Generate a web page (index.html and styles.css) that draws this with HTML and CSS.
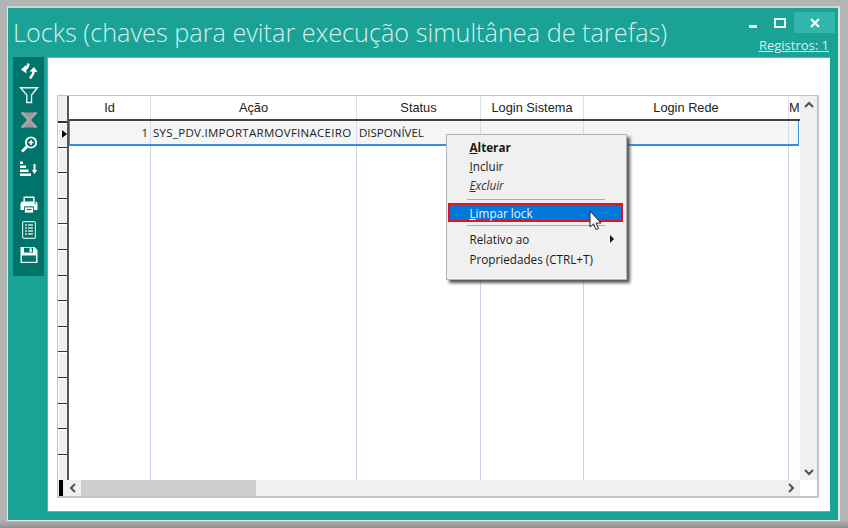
FILE: index.html
```html
<!DOCTYPE html>
<html lang="pt">
<head>
<meta charset="utf-8">
<title>Locks</title>
<link rel="stylesheet" href="styles.css">
</head>
<body>
<div class="frame">
  <div class="window">
    <header class="titlebar">
      <h1 class="title">Locks (chaves para evitar execução simultânea de tarefas)</h1>
      <div class="title-right">
        <div class="controls">
          <span class="ctl ctl-min"></span>
          <span class="ctl ctl-max"></span>
          <span class="ctl ctl-close">
            <svg width="10" height="10" viewBox="0 0 10 10"><path d="M1 1L9 9M9 1L1 9" stroke="#fff" stroke-width="2"/></svg>
          </span>
        </div>
        <a class="records">Registros: 1</a>
      </div>
    </header>
    <div class="main">
      <aside class="sidebar">
        <svg class="tool" width="20" height="20" viewBox="0 0 20 20"><path d="M2 8.500L7 4L7.500 12.500Z" fill="#fff"/><path d="M6 8Q9 7 9.500 2.500" fill="none" stroke="#fff" stroke-width="2.500"/><path d="M10.500 10.500L15 6L18.500 11Z" fill="#fff"/><path d="M15 10Q14 14 11 17.500" fill="none" stroke="#fff" stroke-width="2.500"/></svg>
        <svg class="tool" width="20" height="20" viewBox="0 0 20 20"><path d="M1.500 2.700H18.500L12.500 10V17.500H7.800V10Z" fill="none" stroke="#eef8f6" stroke-width="1.400"/></svg>
        <svg class="tool" width="20" height="20" viewBox="0 0 20 20"><path d="M1.500 2.500H18.500L11.500 10L18.500 17.500H1.500L8.500 10Z" fill="#9a9a9a"/><path d="M3 2.500L17 17.500M17 2.500L3 17.500" stroke="#a6a6a6" stroke-width="3"/></svg>
        <svg class="tool" width="20" height="20" viewBox="0 0 20 20"><circle cx="12" cy="8.500" r="5.200" fill="none" stroke="#fff" stroke-width="1.800"/><path d="M8 12.500L3 17.500" stroke="#fff" stroke-width="2.800"/><path d="M9.500 8.500H14.500M12 6V11" stroke="#fff" stroke-width="1.500"/></svg>
        <svg class="tool" width="20" height="20" viewBox="0 0 20 20"><path d="M1 2.500H4V5H1ZM1 6.500H7V9H1ZM1 10.500H9.500V13H1ZM1 14.500H12V17H1Z" fill="#fff"/><path d="M15.500 5V11.500" stroke="#fff" stroke-width="2"/><path d="M12.800 11H18.200L15.500 15Z" fill="#fff"/></svg>
        <svg class="tool tool-gap" width="20" height="20" viewBox="0 0 20 20"><path d="M5.200 6.500V2.200H14.800V6.500" fill="none" stroke="#fff" stroke-width="1.500"/><path d="M3.500 6.500H16.500Q18.500 6.500 18.500 9V15H15V11.500H5V15H1.500V9Q1.500 6.500 3.500 6.500Z" fill="#fff"/><path d="M5.500 12H14.500V18H5.500Z" fill="#fff" stroke="#00736a" stroke-width="0.800"/><path d="M7.500 14.500H12.500" stroke="#00736a" stroke-width="1.200"/><path d="M15 8H17" stroke="#00736a"/></svg>
        <svg class="tool" width="20" height="20" viewBox="0 0 20 20"><rect x="3.600" y="1.600" width="12.800" height="16.800" rx="1.500" fill="none" stroke="#cfe6e3" stroke-width="1.200"/><path d="M6 5H14M6 8H14M6 11H14M6 14H14" stroke="#cfe6e3" stroke-width="1.600"/><path d="M8.500 4V15" stroke="#00736a"/></svg>
        <svg class="tool" width="20" height="20" viewBox="0 0 20 20"><path d="M1.500 2H15.500L18.500 5V18H1.500Z" fill="#eef8f6"/><path d="M5 2.800H14V7.500H5Z" fill="#00736a"/><path d="M10.500 3.300H12.800V7H10.500Z" fill="#eef8f6"/><path d="M3 10.500H17V16.800H3Z" fill="#00736a"/></svg>
      </aside>
      <section class="panel">
        <div class="grid">
          <div class="grid-body">
            <div class="indicator">
              <div class="ind-head"></div>
              <div class="ind-row ind-current"><span class="ind-arrow"></span></div>
              <div class="ind-row"></div><div class="ind-row"></div><div class="ind-row"></div>
              <div class="ind-row"></div><div class="ind-row"></div><div class="ind-row"></div>
              <div class="ind-row"></div><div class="ind-row"></div><div class="ind-row"></div>
              <div class="ind-row"></div><div class="ind-row"></div><div class="ind-row"></div>
              <div class="ind-row"></div>
            </div>
            <div class="data">
              <div class="heads">
                <div class="c c-id">Id</div>
                <div class="c c-acao">Ação</div>
                <div class="c c-status">Status</div>
                <div class="c c-sis">Login Sistema</div>
                <div class="c c-rede">Login Rede</div>
                <div class="c c-m">M</div>
              </div>
              <div class="columns">
                <div class="col c-id"></div>
                <div class="col c-acao"></div>
                <div class="col c-status"></div>
                <div class="col c-sis"></div>
                <div class="col c-rede"></div>
                <div class="col c-m"></div>
                <div class="row">
                  <div class="cell c-id num">1</div>
                  <div class="cell c-acao cell-wide">SYS_PDV.IMPORTARMOVFINACEIRO</div>
                  <div class="cell c-status">DISPONÍVEL</div>
                  <div class="cell c-sis"></div>
                  <div class="cell c-rede"></div>
                </div>
              </div>
            </div>
            <div class="vscroll">
              <svg width="10" height="7" viewBox="0 0 10 7"><path d="M1 6L5 2L9 6" fill="none" stroke="#505050" stroke-width="2"/></svg>
              <svg width="10" height="7" viewBox="0 0 10 7"><path d="M1 1L5 5L9 1" fill="none" stroke="#505050" stroke-width="2"/></svg>
            </div>
          </div>
          <div class="hscroll">
            <span class="hs-mark"></span>
            <span class="hs-btn"><svg width="7" height="10" viewBox="0 0 7 10"><path d="M6 1L2 5L6 9" fill="none" stroke="#505050" stroke-width="2"/></svg></span>
            <span class="hs-thumb"></span>
            <span class="hs-track"></span>
            <span class="hs-btn"><svg width="7" height="10" viewBox="0 0 7 10"><path d="M1 1L5 5L1 9" fill="none" stroke="#505050" stroke-width="2"/></svg></span>
            <span class="hs-corner"></span>
          </div>
        </div>
      </section>
    </div>
  </div>
</div>
<div class="menu">
  <div class="mi mi-bold"><u>A</u>lterar</div>
  <div class="mi"><u>I</u>ncluir</div>
  <div class="mi mi-italic"><u>E</u>xcluir</div>
  <div class="sep"></div>
  <div class="mi mi-active"><u>L</u>impar lock</div>
  <div class="sep sep-after"></div>
  <div class="mi mi-sub">Relativo ao<span class="sub-arrow"></span></div>
  <div class="mi">Propriedades (CTRL+T)</div>
</div>
<svg class="cursor" width="14" height="22" viewBox="0 0 14 22"><path d="M1 1V17L4.500 13.800L7 19.500L9.500 18.400L7 13H12Z" fill="#fff" stroke="#222" stroke-width="1"/></svg>
</body>
</html>
```

FILE: styles.css
```css
* { box-sizing: border-box; }
html, body { margin: 0; padding: 0; }
body { width: 848px; height: 528px; overflow: hidden; position: relative; font-family: "Open Sans", sans-serif; }
.frame {
  width: 848px; height: 528px;
  background: linear-gradient(#b4b4b4, #b4b4b4 520px, #8e8e8e);
  padding: 6px 8px 7px 7px;
}
.window {
  height: 100%;
  background: #1aa297;
  border-top: 2px solid #c9d6d4;
  border-left: 1px solid #dfe8e7;
  border-right: 2px solid #dfe8e7;
  border-bottom: 1px solid #dfe8e7;
  display: flex; flex-direction: column;
}
.titlebar { height: 49px; display: flex; justify-content: space-between; padding: 0 9px 0 5px; flex: none; }
.title {
  margin: 6px 0 0; font-family: "Open Sans", sans-serif; font-weight: 300;
  font-size: 25.250px; line-height: 36px; color: #d5f0ec; white-space: nowrap;
}
.title-right { display: flex; flex-direction: column; align-items: flex-end; }
.controls { display: flex; align-items: center; height: 21px; margin-top: 4px; margin-right: -6px; }
.ctl { display: flex; align-items: center; justify-content: center; }
.ctl-min { width: 8px; height: 3px; background: #e6f6f4; margin: 7px 17px 0 0; }
.ctl-max { width: 12px; height: 10px; border: 2px solid #e6f6f4; margin: 1px 8px 0 0; }
.ctl-close { width: 41px; height: 21px; background: #32b6ab; }
.records { margin-top: 4px; color: #d5f0ec; font-size: 13px; line-height: 17px; text-decoration: underline; }
.main { flex: 1; display: flex; padding: 0 9px 8px 5px; min-height: 0; }
.sidebar {
  width: 31px; height: 219px; background: #00736a; margin-right: 3px; flex: none;
  display: flex; flex-direction: column; align-items: center; padding-top: 3.500px; gap: 4.600px;
}
.tool { flex: none; height: 20px; }
.tool-gap { margin-top: 12px; }
.panel {
  flex: 1; background: #fff; padding: 37px 11px 13px 9px;
  border-left: 1px solid #8f9e9c; border-top: 1px solid #8f9e9c; border-bottom: 1px solid #8f9e9c;
}
.grid { height: 100%; border: 1px solid #c4c4cf; border-bottom-width: 2px; border-right-width: 2px; display: flex; flex-direction: column; background: #fff; }
.grid-body { flex: 1; display: flex; min-height: 0; overflow: hidden; }
.indicator { width: 11px; flex: none; background: #f0f0f0; border-right: 2px solid #555; overflow: hidden; }
.ind-head { height: 25px; border-bottom: 1px solid #f0f0f0; }
.ind-row { height: 25.600px; border-top: 1px solid #333; position: relative; box-shadow: inset 1px 1px 0 #fff; }
.ind-current { border-top: 2px solid #333; }
.ind-arrow { position: absolute; left: 4px; top: 7px; border-left: 5px solid #000; border-top: 4px solid transparent; border-bottom: 4px solid transparent; }
.data { flex: 1; display: flex; flex-direction: column; min-width: 0; }
.heads { display: flex; height: 25px; flex: none; font-family: "Liberation Sans", sans-serif; font-size: 12.800px; color: #222; border-bottom: 2px solid #444; }
.heads .c { text-align: center; line-height: 23px; border-right: 1px solid #e0e0ea; overflow: hidden; }
.c-id { width: 82px; }
.c-acao { width: 206px; }
.c-status { width: 124px; }
.c-sis { width: 103px; }
.c-rede { width: 205px; }
.c-m { width: 11px; }
.heads .c-m { border-right: 0; text-align: left; }
.columns { flex: 1; display: flex; position: relative; }
.col { border-right: 1px solid #cfcfe8; flex: none; }
.col.c-m { border-right: 0; }
.row {
  position: absolute; left: 0; right: 1px; top: 0; height: 25px; display: flex;
  background: #f5f5f5; border: 1px solid #2f90ea; border-top: 0; border-bottom-width: 2px;
  font-size: 11.500px; line-height: 24px; color: #222;
}
.cell { flex: none; padding: 0 2px; white-space: nowrap; border-right: 1px solid #d9d9ee; overflow: hidden; }
.cell.c-id { width: 81px; }
.cell-wide { letter-spacing: 0.280px; }
.num { text-align: right; }
.vscroll { width: 17px; flex: none; background: #f0f0f0; display: flex; flex-direction: column; justify-content: space-between; align-items: center; padding: 5px 0 4px; }
.hscroll { height: 16px; flex: none; display: flex; background: #f0f0f0; }
.hs-mark { width: 6px; background: #000; border-left: 1px solid #f0f0f0; border-right: 1px solid #f0f0f0; flex: none; }
.hs-btn { width: 17px; flex: none; display: flex; align-items: center; justify-content: center; }
.hs-thumb { width: 175px; background: #cdcdcd; flex: none; }
.hs-track { flex: 1; }
.hs-corner { width: 17px; background: #fff; flex: none; }
.menu {
  position: absolute; left: 446px; top: 134px; width: 181px; height: 146px;
  background: #f0f0f0; border: 1px solid #b5b5b5; box-shadow: 3px 3px 3px #555;
  padding: 2px 1px; font-family: "Open Sans", sans-serif; font-size: 11.700px; color: #1a1a1a;
}
.mi { height: 19.500px; line-height: 19px; padding-left: 21.500px; white-space: nowrap; position: relative; }
.mi-bold { font-weight: 700; line-height: 20px; }
.mi-italic { font-style: italic; color: #333; }
.sep { height: 1px; background: #aaa; margin: 3px 20px 3.500px 19px; }
.sep-after { margin: 3px 20px 4px 19px; }
.mi-active { height: 19px; line-height: 16px; margin-right: 2px; background: #0078d7; color: #e8f4ff; border: 2px solid #e8101c; padding-left: 19.500px; }
.sub-arrow { position: absolute; right: 11px; top: 5px; border-left: 4px solid #111; border-top: 4px solid transparent; border-bottom: 4px solid transparent; }
.cursor { position: absolute; left: 589px; top: 210px; }
```
